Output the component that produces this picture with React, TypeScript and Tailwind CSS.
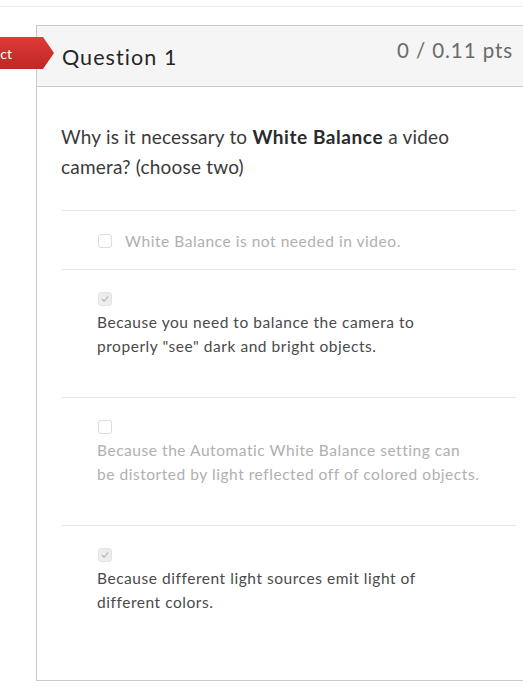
import React from "react";

type Answer = {
  lines: string[];
  checked: boolean;
  selected: boolean;
  inline?: boolean;
};

const answers: Answer[] = [
  { lines: ["White Balance is not needed in video."], checked: false, selected: false, inline: true },
  { lines: ["Because you need to balance the camera to", 'properly "see" dark and bright objects.'], checked: true, selected: true },
  { lines: ["Because the Automatic White Balance setting can", "be distorted by light reflected off of colored objects."], checked: false, selected: false },
  { lines: ["Because different light sources emit light of", "different colors."], checked: true, selected: true },
];

function Checkbox({ checked }: { checked: boolean }) {
  return (
    <span
      className={`inline-flex h-[14px] w-[14px] shrink-0 items-center justify-center rounded-[3px] border ${
        checked ? "border-[#e4e4e4] bg-[#ededed]" : "border-[#dcdcdc] bg-white"
      }`}
    >
      {checked && (
        <svg viewBox="0 0 12 12" className="h-[10px] w-[10px]" fill="none">
          <path d="M2.5 6.3 L5 8.7 L9.6 3.2" stroke="#b3b3b3" strokeWidth="1.3" strokeLinecap="round" strokeLinejoin="round" />
        </svg>
      )}
    </span>
  );
}

export default function App() {
  return (
    <div className="relative h-[700px] w-[523px] overflow-hidden bg-white font-['Lato','Liberation_Sans',sans-serif]">
      <div className="h-[7px] border-b border-[#ececec]" />

      <div className="relative ml-[36px] mt-[18px] w-[500px] border border-[#c9c9c9]">
        {/* header */}
        <div className="flex h-[61px] items-center justify-between border-b border-[#c9c9c9] bg-[#f5f5f5] pl-[25px] pr-[22px]">
          <h2 className="mt-[3px] text-[21.5px] leading-none tracking-[0.05em] text-[#262626]">Question 1</h2>
          <span className="mt-[-12px] text-[20.5px] leading-none tracking-[0.045em] text-[#6a6a6a]">0 / 0.11 pts</span>
        </div>

        {/* body */}
        <div className="h-[593px] pl-[24px] pr-[19px] pt-[35px]">
          <p className="whitespace-nowrap text-[19px] leading-[30px] tracking-[0.01em] text-[#3a3a3a]">
            Why is it necessary to <strong className="font-bold tracking-[0.03em] text-[#2a2a2a]">White Balance</strong> a video
            <br />
            camera? (choose two)
          </p>

          <div className="mt-[28px] border-t border-[#e6e6e6]">
            {answers.map((a, i) => (
              <div
                key={i}
                className={`pl-[36px] text-[15.5px] leading-[24px] tracking-[0.035em] ${
                  a.selected ? "text-[#4a4a4a]" : "text-[#b0b0b0]"
                } ${a.inline ? "pt-[18px] pb-[16px]" : "pt-[18px] pb-[39px]"} ${
                  i === answers.length - 1 ? "" : "border-b border-[#e6e6e6]"
                }`}
              >
                {a.inline ? (
                  <div className="flex items-center gap-[13px]">
                    <span className="ml-[1px] flex"><Checkbox checked={a.checked} /></span>
                    <span>{a.lines[0]}</span>
                  </div>
                ) : (
                  <div>
                    <div className="flex h-[22px] items-center pl-[1px]">
                      <Checkbox checked={a.checked} />
                    </div>
                    {a.lines.map((l, j) => (
                      <div key={j} className="whitespace-nowrap">{l}</div>
                    ))}
                  </div>
                )}
              </div>
            ))}
          </div>
        </div>
      </div>

      {/* result badge */}
      <div className="absolute left-0 top-[37px] flex h-[32px] w-[54px] items-center justify-end overflow-hidden bg-gradient-to-b from-[#df3a36] to-[#c02724] pr-[42px] text-[14px] text-white [clip-path:polygon(0_0,43px_0,54px_50%,43px_100%,0_100%)]">
        <span className="whitespace-nowrap">Incorrect</span>
      </div>
    </div>
  );
}
